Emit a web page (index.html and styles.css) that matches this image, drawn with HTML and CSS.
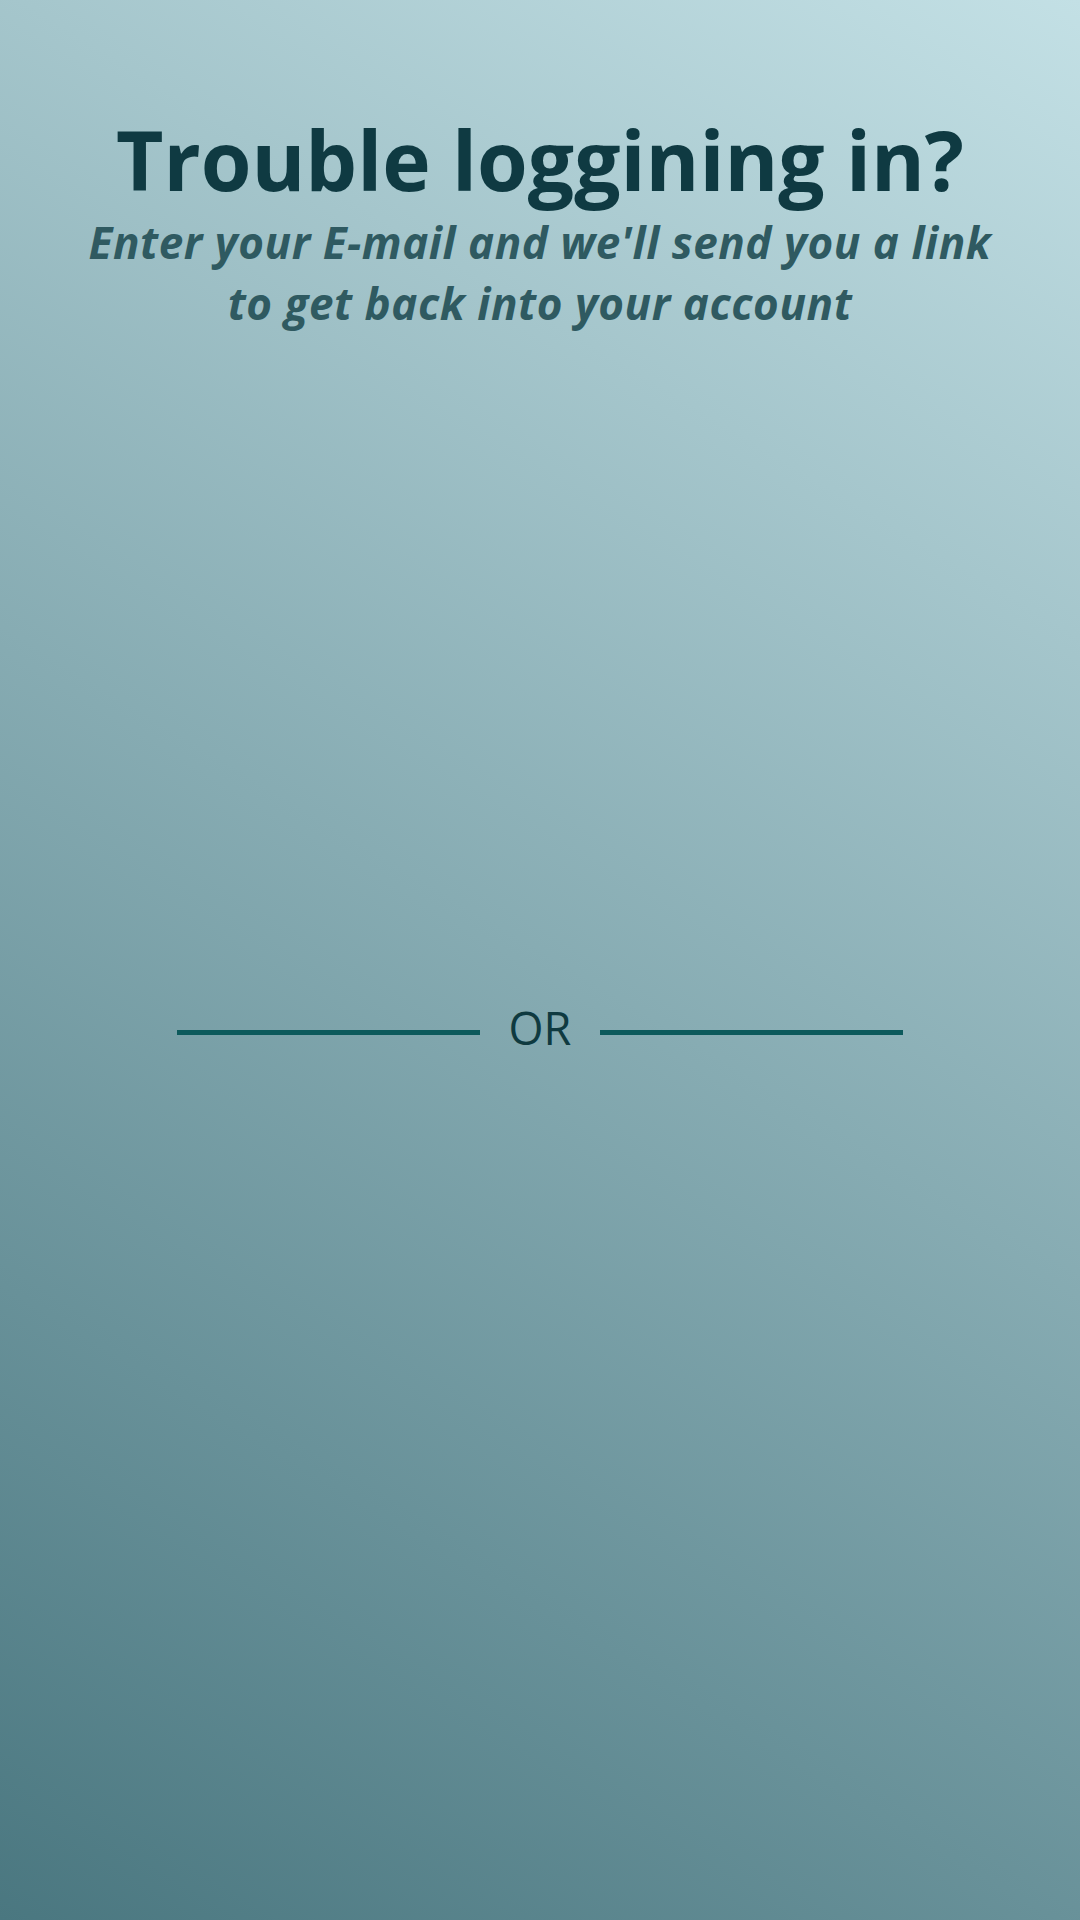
FILE: index.html
```html
<!DOCTYPE html>
<html lang="en">
<head>
<meta charset="utf-8">
<title>Trouble logging in</title>
<link rel="stylesheet" href="styles.css">
</head>
<body>
<main class="screen">
  <header class="intro">
    <h1 class="title">Trouble loggining in?</h1>
    <p class="subtitle">Enter your E-mail and we'll send you a link<br>to get back into your account</p>
  </header>
  <div class="divider">
    <span class="divider-line"></span>
    <span class="divider-text">OR</span>
    <span class="divider-line"></span>
  </div>
</main>
</body>
</html>
```
FILE: styles.css
```css
html, body {
  margin: 0;
  padding: 0;
}
body {
  width: 1080px;
  height: 1920px;
  overflow: hidden;
  font-family: "Open Sans", Lato, sans-serif;
}
.screen {
  width: 1080px;
  height: 1920px;
  box-sizing: border-box;
  background: linear-gradient(31deg, #4a7780 0%, #c3e0e5 100%);
  display: flex;
  flex-direction: column;
  align-items: center;
  padding-top: 109px;
}
.intro {
  display: flex;
  flex-direction: column;
  align-items: center;
  text-align: center;
}
.title {
  margin: 0;
  font-size: 82px;
  line-height: 100px;
  font-weight: 700;
  color: #0f3a42;
}
.subtitle {
  margin: 3px 0 0;
  font-size: 44px;
  line-height: 61px;
  font-weight: 700;
  font-style: italic;
  letter-spacing: 0.55px;
  color: #2f5a61;
}
.divider {
  margin-top: 667px;
  display: flex;
  align-items: center;
  gap: 29px;
  height: 54px;
}
.divider-line {
  width: 303px;
  height: 5px;
  margin-top: 9px;
  background: #0d5a5c;
}
.divider-text {
  font-size: 45px;
  line-height: 54px;
  font-weight: 400;
  color: #0f3a40;
}
```
